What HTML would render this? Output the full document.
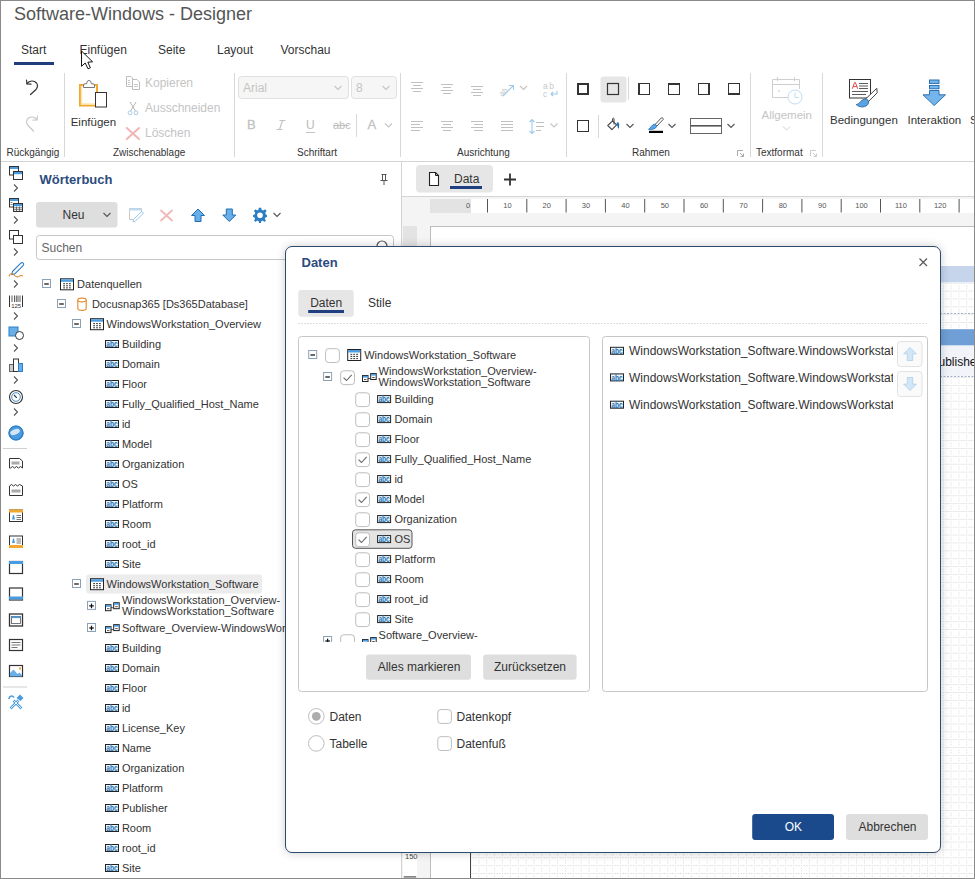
<!DOCTYPE html>
<html><head><meta charset="utf-8">
<style>
*{box-sizing:border-box}
html,body{margin:0;padding:0}
body{width:975px;height:879px;overflow:hidden;position:relative;background:#fff;font-family:"Liberation Sans",sans-serif;color:#333}
.a{position:absolute}
.t{position:absolute;white-space:nowrap;line-height:20px;font-size:12px;color:#333}
.s11{font-size:11px}
.s10{font-size:10px}
.dis{color:#c4c4c4}
.sep{position:absolute;width:1px;background:#d6d6d6}
svg{position:absolute;overflow:visible}
</style></head><body>

<!-- window frame -->
<div class="a" style="left:0;top:0;width:975px;height:879px;border:1px solid #8a8a8a;z-index:50;pointer-events:none"></div>

<!-- title -->
<div class="t" style="left:14px;top:2px;font-size:18px;line-height:24px;color:#555">Software-Windows - Designer</div>

<!-- ribbon tabs -->
<div class="t" style="left:21px;top:40px">Start</div>
<div class="t" style="left:79.5px;top:40px">Einfügen</div>
<div class="t" style="left:158px;top:40px">Seite</div>
<div class="t" style="left:217px;top:40px">Layout</div>
<div class="t" style="left:280.5px;top:40px">Vorschau</div>
<div class="a" style="left:14px;top:62px;width:40px;height:3px;background:#1f3d7a"></div>


<!-- RIBBON CONTENT -->
<svg width="975" height="170" style="left:0;top:0">
 <!-- separators -->
 <g fill="#d8d8d8">
  <rect x="64" y="73" width="1" height="84"/>
  <rect x="234" y="73" width="1" height="84"/>
  <rect x="400" y="73" width="1" height="84"/>
  <rect x="566" y="73" width="1" height="84"/>
  <rect x="750" y="73" width="1" height="84"/>
  <rect x="822" y="73" width="1" height="84"/>
  <rect x="356" y="114" width="1" height="23"/>
  <rect x="628" y="77" width="1" height="23"/>
  <rect x="598" y="115" width="1" height="23"/>
 </g>
 <!-- undo -->
 <g fill="none" stroke="#333" stroke-width="1.2" stroke-linecap="round">
  <path d="M27 83.5 C29.5 80.5 34 80 36.5 83 C38 85 37.5 87.5 36 89.5 L30.5 94.5"/>
  <path d="M26.5 80 L27 84 L31 84.2"/>
 </g>
 <g fill="none" stroke="#c8c8c8" stroke-width="1.2" stroke-linecap="round">
  <path d="M37 119.5 C34.5 116.5 30 116 27.5 119 C26 121 26.5 123.5 28 125.5 L33.5 131"/>
  <path d="M37.5 116 L37 120 L33 120.2"/>
 </g>
 <!-- clipboard -->
 <rect x="80" y="85" width="17" height="20.5" fill="#fff" stroke="#f0a830" stroke-width="2"/><path d="M81.5 86 V104 H95" stroke="#ffe6b0" stroke-width="1.5" fill="none"/>
 <path d="M83.5 87.5 L83.5 85 Q83.5 83.8 85 83.8 L86.6 83.8 Q86.8 80.4 89 80.4 Q91.2 80.4 91.4 83.8 L93 83.8 Q94.5 83.8 94.5 85 L94.5 87.5 Z" fill="#fff" stroke="#777" stroke-width="1"/>
 <rect x="95.5" y="92.5" width="11" height="14.5" fill="#fff" stroke="#333" stroke-width="1"/>
 <!-- copy -->
 <g fill="#fff" stroke="#bdbdbd" stroke-width="1">
  <path d="M126.5 76.5 H131 L132.5 78 V86.5 H126.5 Z"/>
  <path d="M132.5 79.5 H137 L139.5 82 V89.5 H132.5 Z"/>
  <path d="M128 80.5 H130 M128 82.5 H130.5 M128 84.5 H130.5 M134 84.5 H138 M134 86.5 H138" fill="none" stroke-width="0.8"/>
 </g>
 <!-- scissors -->
 <g fill="none" stroke-width="1">
  <path d="M130 102 L135.5 111 M136 102 L130.5 111" stroke="#b5b5b5"/>
  <circle cx="130" cy="112.8" r="1.9" stroke="#a9cde8"/>
  <circle cx="136" cy="112.8" r="1.9" stroke="#a9cde8"/>
 </g>
 <!-- delete X -->
 <path d="M126.8 128 L139 139 M139 128 L126.8 139" stroke="#f2b5b5" stroke-width="2" stroke-linecap="round"/>
 <!-- font combos -->
 <rect x="238.5" y="76.5" width="110" height="22" rx="3" fill="#f6f6f6" stroke="#e0e0e0"/>
 <rect x="351.5" y="76.5" width="45" height="22" rx="3" fill="#f6f6f6" stroke="#e0e0e0"/>
 <g fill="none" stroke="#c4c4c4" stroke-width="1.1">
  <path d="M334.5 86 L338 89.5 L341.5 86"/>
  <path d="M382.5 86 L386 89.5 L389.5 86"/>
  <path d="M385 123.5 L388.5 127 L392 123.5"/>
  <path d="M520 86 L523.5 89.5 L527 86"/>
  <path d="M550.5 123.5 L554 127 L557.5 123.5"/>
 </g>
 <!-- U underline / abc strike -->
 <path d="M279.5 120.5 H285.5 M276.5 129.5 H282.5 M282.5 120.5 L279.5 129.5" stroke="#c4c4c4" stroke-width="1.2" fill="none"/>
 <rect x="306" y="132" width="9" height="1" fill="#c4c4c4"/>
 <rect x="333" y="125" width="16" height="1" fill="#c4c4c4"/>
 <!-- align icons row1 -->
 <g stroke="#c0c0c0" stroke-width="1">
  <path d="M411 82.5 H423 M413 85.5 H421 M411 88.5 H423 M413 91.5 H421"/>
  <path d="M441 84.5 H453 M443 87.5 H451 M441 90.5 H453 M443 93.5 H451"/>
  <path d="M471 86.5 H483 M473 89.5 H481 M471 92.5 H483 M473 95.5 H481"/>
  <path d="M411 121.5 H423 M411 124.5 H420 M411 127.5 H423 M411 130.5 H420"/>
  <path d="M441 121.5 H453 M443 124.5 H451 M441 127.5 H453 M443 130.5 H451"/>
  <path d="M471 121.5 H483 M474 124.5 H483 M471 127.5 H483 M474 130.5 H483"/>
  <path d="M501 121.5 H513 M501 124.5 H513 M501 127.5 H513 M501 130.5 H513"/>
  <path d="M536 122.5 H544 M536 126.5 H544 M536 130.5 H541"/>
 </g>
 <!-- rotate text -->
 <text x="499" y="95" font-size="8" fill="#c8c8c8" transform="rotate(-40 503 92)" font-family="Liberation Sans">ab</text>
 <path d="M503 96 L513.5 85.5 M509 85.5 H513.5 V90" stroke="#9fcbea" stroke-width="1.1" fill="none"/>
 <!-- wrap -->
 <text x="543" y="89" font-size="8.5" fill="#c8c8c8" font-family="Liberation Sans" letter-spacing="1.5">ab</text>
 <text x="543" y="97" font-size="8.5" fill="#c8c8c8" font-family="Liberation Sans">c</text>
 <path d="M557 91 V94 H551 M553 92 L551 94 L553 96" stroke="#9fcbea" stroke-width="1.1" fill="none"/>
 <!-- line spacing arrows -->
 <path d="M532 119.5 V133.5 M529.5 122 L532 119.5 L534.5 122 M529.5 131 L532 133.5 L534.5 131" stroke="#9fcbea" stroke-width="1.1" fill="none"/>
 <!-- Rahmen -->
 <rect x="600.5" y="76.5" width="26" height="26" rx="3" fill="#e6e6e6"/>
 <g fill="none" stroke="#333">
  <rect x="578" y="84" width="10" height="10" stroke-width="2"/>
  <rect x="607.5" y="83.5" width="11" height="11" stroke-width="1.2"/>
  <rect x="638.5" y="83.5" width="11" height="11" stroke-width="1"/>
  <path d="M639 83 V95" stroke-width="2"/>
  <rect x="668.5" y="83.5" width="11" height="11" stroke-width="1"/>
  <path d="M668 84 H680" stroke-width="2"/>
  <rect x="698.5" y="83.5" width="11" height="11" stroke-width="1"/>
  <path d="M709 83 V95" stroke-width="2"/>
  <rect x="728.5" y="83.5" width="11" height="11" stroke-width="1"/>
  <path d="M728 94 H740" stroke-width="2"/>
  <rect x="577.5" y="120.5" width="11" height="11" stroke-width="1"/>
 </g>
 <!-- fill bucket -->
 <path d="M607.8 125.5 L612.5 120.8 L616.6 124.9 L611.9 129.6 Z" fill="#fff" stroke="#444" stroke-width="1.1" stroke-linejoin="round"/>
 <path d="M612.6 121 V118.6 Q613.3 117.6 614 118.6 V124.5" fill="none" stroke="#444" stroke-width="1"/>
 <path d="M616.6 122.8 Q618.6 121.2 619.2 124.2 L618.9 129 Q617.6 127.5 617.2 125.5 Z" fill="#1f6fb5"/>
 <!-- brush -->
 <path d="M662.3 117.8 Q663.5 118.3 663.2 119.4 L656.8 126.2 L655 124.6 L661.2 118 Z" fill="#fff" stroke="#444" stroke-width="0.9"/>
 <path d="M648.5 129.3 C650.5 128.8 651 124.8 654.8 124 L656.8 126 C656 129 652 130 648.5 129.3 Z" fill="#5aa8ea" stroke="#1f6fb5" stroke-width="0.8"/>
 <rect x="649" y="130.8" width="14" height="2.2" fill="#000"/>
 <!-- line style -->
 <rect x="690.5" y="118.5" width="31" height="15" fill="#fff" stroke="#666"/>
 <rect x="690.5" y="125" width="31" height="1.6" fill="#555"/>
 <g fill="none" stroke="#555" stroke-width="1.1">
  <path d="M626.5 124 L630 127.5 L633.5 124"/>
  <path d="M668.5 124 L672 127.5 L675.5 124"/>
  <path d="M727.5 124 L731 127.5 L734.5 124"/>
 </g>
 <!-- launchers -->
 <g fill="none" stroke="#aaa" stroke-width="1">
  <path d="M737.5 156 V150.5 H743"/><path d="M740 153 L743.5 156.5 M743.5 153.5 V156.5 H740.5"/>
  <path d="M810.5 156 V150.5 H816" stroke="#ccc"/><path d="M813 153 L816.5 156.5 M816.5 153.5 V156.5 H813.5" stroke="#ccc"/>
 </g>
 <!-- calendar -->
 <g fill="none" stroke="#cfcfcf" stroke-width="1">
  <path d="M790 97.5 H772.5 V79.5 H799.5 V89"/>
  <path d="M772.5 84.5 H799.5 M777.5 77 V81 M794.5 77 V81"/>
  <circle cx="795" cy="97" r="7" fill="#fff" stroke="#bfdcf2"/>
  <path d="M795 92.5 V97.5 H798.5" stroke="#bfdcf2"/>
  <path d="M783 126.5 L786.5 130 L790 126.5"/>
 </g>
 <circle cx="779" cy="91" r="0.8" fill="#bbb"/>
 <!-- Bedingungen icon -->
 <rect x="849.5" y="79.5" width="21" height="18.5" fill="#fff" stroke="#333"/>
 <path d="M852.3 88.8 L854.6 82.5 H855.4 L857.7 88.8 M853.2 86.6 H856.8" stroke="#e04848" stroke-width="1" fill="none"/>
 <path d="M859 83.5 H868 M859 86 H868 M859 88.5 H868 M852 91.5 H868 M852 94.5 H866" stroke="#333" stroke-width="0.8"/>
 <path d="M876.8 88.3 L865 99.5 L867.8 102.3 L877.2 92.8 Z" fill="#fff" stroke="#333" stroke-width="0.9"/>
 <path d="M856.2 104.6 C859.5 104.5 860.5 100 864.5 99 C868.5 98.5 869.8 102.5 867.2 105.2 C864 107.8 859 107.4 856.2 104.6 Z" fill="#5aa3e0" stroke="#1f5f9f" stroke-width="0.8"/>
 <!-- Interaktion icon -->
 <g fill="#74b6ec" stroke="#1f64a8" stroke-width="0.9">
  <rect x="929.5" y="80" width="9.5" height="3.4"/>
  <rect x="929.5" y="85.4" width="9.5" height="3.4"/>
  <path d="M929.5 90.5 H939 V94.8 H945.5 L934.2 105.5 L923 94.8 H929.5 Z"/>
 </g>
 <!-- mouse cursor -->
 <path d="M81.5 51 V66.3 L85.2 63 L88 68.8 L90.4 67.8 L87.8 62.2 L92.6 61.8 Z" fill="#fff" stroke="#111" stroke-width="1" stroke-linejoin="round"/>
</svg>
<div class="t dis" style="left:145px;top:72.5px">Kopieren</div>
<div class="t dis" style="left:145px;top:97.5px">Ausschneiden</div>
<div class="t dis" style="left:145px;top:122.5px">Löschen</div>
<div class="t" style="left:70.7px;top:111.5px;font-size:11.5px">Einfügen</div>
<div class="t s10" style="left:6.5px;top:143px">Rückgängig</div>
<div class="t s10" style="left:113px;top:143px">Zwischenablage</div>
<div class="t s10" style="left:297px;top:143px">Schriftart</div>
<div class="t s10" style="left:457px;top:143px">Ausrichtung</div>
<div class="t s10" style="left:632px;top:143px">Rahmen</div>
<div class="t s10" style="left:756px;top:143px">Textformat</div>
<div class="t dis" style="left:243px;top:77.5px">Arial</div>
<div class="t dis" style="left:356px;top:77.5px">8</div>
<div class="t dis" style="left:247px;top:115px;font-size:13px;-webkit-text-stroke:0.3px #c4c4c4;color:#c0c0c0">B</div>

<div class="t dis" style="left:306px;top:114.5px;font-size:12px;color:#bcbcbc">U</div>
<div class="t dis" style="left:333px;top:115px;font-size:11px;color:#bcbcbc">abc</div>
<div class="t dis" style="left:367.5px;top:115px;font-size:13px;-webkit-text-stroke:0.3px #c4c4c4;color:#c0c0c0">A</div>
<div class="t dis" style="left:761.5px;top:104.5px;font-size:11.5px">Allgemein</div>
<div class="t" style="left:830px;top:109.7px;font-size:11.5px">Bedingungen</div>
<div class="t" style="left:907.5px;top:109.7px;font-size:11.5px">Interaktion</div>
<div class="t" style="left:970px;top:109.7px;font-size:11.5px">S</div>

<!-- ribbon bottom border -->
<div class="a" style="left:0;top:161px;width:975px;height:1px;background:#d4d4d4"></div>

<!-- SIDEBAR / PANEL -->
<div class="a" style="left:401px;top:162px;width:1px;height:717px;background:#d4d4d4"></div>


<svg width="400" height="879" style="left:0;top:0">
 <g fill="none" stroke="#555" stroke-width="1.1">
  <path d="M14 184.5 L17.5 188 L14 191.5"/>
  <path d="M14 216.5 L17.5 220 L14 223.5"/>
  <path d="M14 248.5 L17.5 252 L14 255.5"/>
  <path d="M14 280.5 L17.5 284 L14 287.5"/>
  <path d="M14 312.5 L17.5 316 L14 319.5"/>
  <path d="M14 344.5 L17.5 348 L14 351.5"/>
  <path d="M14 376.5 L17.5 380 L14 383.5"/>
  <path d="M14 408.5 L17.5 412 L14 415.5"/>
 </g>
 <!-- icon1 windows -->
 <rect x="9.5" y="166.5" width="9" height="8.5" fill="#fff" stroke="#333"/>
 <rect x="10" y="167" width="8" height="2" fill="#4a9be0"/>
 <rect x="13.5" y="171.5" width="9" height="8" fill="#fff" stroke="#333"/>
 <rect x="14" y="172" width="8" height="2.2" fill="#4a9be0"/>
 <!-- icon2 tables -->
 <rect x="9.5" y="198.5" width="9" height="8.5" fill="#fff" stroke="#333"/>
 <rect x="10" y="199" width="8" height="2" fill="#4a9be0"/>
 <path d="M10.5 202.5 H12.5 M10.5 204.5 H12.5" stroke="#666" stroke-width="0.8"/>
 <rect x="13.5" y="203.5" width="9" height="8" fill="#fff" stroke="#333"/>
 <rect x="14" y="204" width="8" height="2.2" fill="#4a9be0"/>
 <path d="M14 207.8 H22 M14 209.7 H22 M16.5 206.5 V211 M19.5 206.5 V211" stroke="#555" stroke-width="0.8"/>
 <!-- icon3 -->
 <rect x="9.5" y="230.5" width="9" height="8.5" fill="#fff" stroke="#333"/>
 <rect x="13.5" y="235.5" width="9" height="8" fill="#fff" stroke="#333"/>
 <!-- pen -->
 <path d="M12.5 271.5 L20.8 263.2 Q22 262 23.2 263.2 Q24.3 264.4 23.1 265.6 L14.8 273.9 L11.8 274.6 Z" fill="#fff" stroke="#2f7fc4" stroke-width="1.1" stroke-linejoin="round"/>
 <path d="M9 276.5 C10 272.5 12.5 273 14 275 C15.5 277 18 277.5 20 275.8 C21 275 22 275.5 23 276" fill="none" stroke="#e08a2c" stroke-width="1.1"/>
 <!-- barcode -->
 <path d="M9.5 295.5 V307 M22.5 295.5 V307" stroke="#333" stroke-width="1"/>
 <path d="M12 295.5 V302 M14.5 295.5 V302 M16.3 295.5 V302 M18 295.5 V302 M20 295.5 V302" stroke="#333" stroke-width="0.8"/>
 <text x="11.2" y="307.5" font-size="5" fill="#333" font-family="Liberation Sans" textLength="10" lengthAdjust="spacingAndGlyphs">125</text>
 <!-- shapes -->
 <rect x="9" y="327" width="9" height="9" fill="#68aee8" stroke="#2f7fc4"/>
 <circle cx="19.5" cy="335.5" r="4" fill="#fff" stroke="#333"/>
 <!-- chart -->
 <rect x="9.5" y="364.5" width="4" height="7" fill="#ccc" stroke="#666"/>
 <rect x="13.5" y="359" width="5" height="12.5" fill="#fff" stroke="#333"/>
 <rect x="18.5" y="363.5" width="4" height="8" fill="#68aee8" stroke="#2f7fc4"/>
 <!-- gauge -->
 <circle cx="16" cy="397" r="6.5" fill="#fff" stroke="#333" stroke-width="1.1"/>
 <circle cx="16" cy="397" r="4.3" fill="none" stroke="#2f7fc4" stroke-width="0.9"/>
 <path d="M14 395 L16.8 397.8" stroke="#333" stroke-width="1.1"/>
 <!-- globe -->
 <circle cx="16" cy="433" r="7" fill="#4a9be0" stroke="#2f7fc4"/>
 <ellipse cx="15" cy="432" rx="5" ry="2.6" fill="#fff" opacity=".75" transform="rotate(-20 15 432)"/>
 <circle cx="16" cy="433" r="7" fill="none" stroke="#2f7fc4" stroke-width="1.2"/>
 <rect x="3" y="448" width="24" height="1" fill="#d0d0d0"/>
 <!-- band icons -->
 <path d="M9.5 468 V458.5 H19.5 L22.5 461 V468 L20.5 466.5 L18.5 468 L16.5 466.5 L14.5 468 L12.5 466.5 L10.5 468 Z" fill="#fff" stroke="#333"/>
 <rect x="11.5" y="461.5" width="8" height="3" fill="#aaa"/>
 <path d="M9.5 486 L11.5 484.5 L13.5 486 L15.5 484.5 L17.5 486 L19.5 484.5 L22.5 486 V495.5 H9.5 Z" fill="#fff" stroke="#333"/>
 <rect x="11.5" y="489.5" width="9" height="3" fill="#aaa"/>
 <rect x="9.5" y="510" width="13" height="11.5" fill="#fff" stroke="#333"/>
 <rect x="9" y="509.5" width="14" height="3" fill="#f0a830"/>
 <path d="M12 519.5 L13 515 H14 L15 519.5 Z" fill="#4a9be0"/>
 <path d="M16.5 515.5 H21 M16.5 517.5 H21 M16.5 519.5 H21" stroke="#555" stroke-width="0.8"/>
 <rect x="9.5" y="536" width="13" height="11.5" fill="#fff" stroke="#333"/>
 <rect x="9" y="545" width="14" height="3" fill="#f0a830"/>
 <path d="M12 543 L13 538.5 H14 L15 543 Z" fill="#4a9be0"/>
 <path d="M16.5 539 H21 M16.5 541 H21 M16.5 543 H21" stroke="#555" stroke-width="0.8"/>
 <rect x="9.5" y="561.5" width="13" height="12" fill="#fff" stroke="#333" stroke-width="1.2"/>
 <rect x="9" y="561" width="14" height="3" fill="#4a9be0"/>
 <rect x="9.5" y="588" width="13" height="12" fill="#fff" stroke="#333" stroke-width="1.2"/>
 <rect x="9" y="596.5" width="14" height="3" fill="#4a9be0"/>
 <rect x="9.5" y="614" width="13" height="12" fill="#fff" stroke="#333" stroke-width="1.3"/>
 <rect x="11.5" y="616.5" width="9" height="7" fill="#fff" stroke="#555" stroke-width="0.8"/>
 <rect x="11.5" y="616.5" width="9" height="1.6" fill="#4a9be0"/>
 <rect x="9.5" y="639.5" width="13" height="11" fill="#fff" stroke="#333" stroke-width="1.2"/>
 <path d="M11.5 642.5 H20.5 M11.5 645 H20.5 M11.5 647.5 H17.5" stroke="#666" stroke-width="0.9"/>
 <rect x="9.5" y="665.5" width="13" height="11" fill="#fff" stroke="#333" stroke-width="1.2"/>
 <path d="M10 676.5 V673 L13.5 669.5 L17.5 674 L19.5 672.5 L22 675 V676.5 Z" fill="#68aee8"/>
 <rect x="19" y="667.5" width="2" height="2" fill="#f0a830"/>
 <rect x="3" y="686.5" width="24" height="1" fill="#d0d0d0"/>
 <path d="M10.5 708.5 L18.5 700.5 M13.5 700.5 L21.5 708.5" stroke="#4a9be0" stroke-width="2.6" fill="none"/>
 <path d="M10.5 708.5 L18.5 700.5 M13.5 700.5 L21.5 708.5" stroke="#fff" stroke-width="0.9" fill="none"/>
 <path d="M16.5 698 L20 694.5 L23.5 698 L20.5 701 Z" fill="#4a9be0"/>
 <path d="M9 699 C9 696 12 695 14 697.5" stroke="#4a9be0" stroke-width="1.6" fill="none"/>
 <!-- panel toolbar -->
 <rect x="36" y="202" width="81.5" height="25.5" rx="3" fill="#dedede"/>
 <path d="M103.5 213 L107 216.5 L110.5 213" fill="none" stroke="#555" stroke-width="1.1"/>
 <path d="M137 219.5 H129.5 V208.5 H141.5 V213" fill="none" stroke="#c8c8c8"/>
 <rect x="129.5" y="208.5" width="12" height="2" fill="#bcdcf4"/>
 <path d="M142.8 213.8 L135.5 221.1 L133 221.8 L133.7 219.3 L141 212 Q141.9 211.2 142.7 212 Q143.5 212.9 142.8 213.8 Z" fill="#fff" stroke="#9fcbea" stroke-width="1"/>
 <path d="M160.5 210 L172.5 221 M172.5 210 L160.5 221" stroke="#f2b8b8" stroke-width="1.8"/>
 <path d="M198 209 L204.5 215.5 H201 V221.5 H195 V215.5 H191.5 Z" fill="#68aee8" stroke="#1f6fb5" stroke-width="1"/>
 <path d="M229.3 221.5 L235.8 215 H232.3 V209 H226.3 V215 H222.8 Z" fill="#68aee8" stroke="#1f6fb5" stroke-width="1"/>
 <g transform="translate(260 215.3)">
  <path d="M-1.3 -7 H1.3 L1.7 -4.8 L3.5 -4 L5.3 -5.3 L7 -3.5 L5.5 -1.6 L6.2 0.2 L7.3 0.8 V2.8 L5.6 3.4 L5 5 L6.3 6.5 L4.5 8 L3 6.6 L1.3 7.3 L1 9 H-1 L-1.4 7.3 L-3 6.6 L-4.6 8 L-6.3 6.5 L-5.1 5 L-5.7 3.4 L-7.3 2.8 V0.8 L-5.6 0.2 L-5 -1.6 L-6.4 -3.5 L-4.6 -5.3 L-3 -4 L-1.6 -4.8 Z" fill="#2a7fc4" transform="scale(0.95) translate(0 -1)"/>
  <circle cx="0" cy="0" r="2.8" fill="#fff"/>
 </g>
 <path d="M273.5 213 L277 216.5 L280.5 213" fill="none" stroke="#555" stroke-width="1.1"/>
 <!-- pin -->
 <path d="M381.5 174.5 H386.5 M382.5 175 V180.5 H385.5 V175 M380.5 180.5 H387.5 M384 180.5 V185" stroke="#555" stroke-width="1" fill="none"/>
 <!-- search -->
 <rect x="36.5" y="235.5" width="357" height="24" rx="3" fill="#fff" stroke="#c6c6c6"/>
 <circle cx="382" cy="246" r="5" fill="none" stroke="#555" stroke-width="1.2"/>
</svg>
<div class="t" style="left:39.5px;top:169.5px;font-size:13px;font-weight:bold;color:#2c4c7c">Wörterbuch</div>
<div class="t" style="left:62.5px;top:204.5px">Neu</div>
<div class="t" style="left:41.5px;top:237.5px;color:#666">Suchen</div>

<div class="a" style="left:0;top:162px;width:401px;height:716px;overflow:hidden"><div class="a" style="left:0;top:-162px;width:401px;height:879px"><svg width="401" height="879" style="left:0;top:0"><rect x="42.5" y="279.5" width="8" height="8" fill="#fff" stroke="#8da1b6"/><path d="M44.2 284.0 H48.8" stroke="#111" stroke-width="1.25"/><rect x="60.5" y="278.8" width="13" height="11" fill="#fff" stroke="#222"/><rect x="61" y="279.3" width="12" height="2.5" fill="#4d9de0"/><rect x="63.2" y="283.1" width="1.8" height="1.1" fill="#444"/><rect x="66.10000000000001" y="283.1" width="1.8" height="1.1" fill="#444"/><rect x="69.0" y="283.1" width="1.8" height="1.1" fill="#444"/><rect x="63.2" y="285.20000000000005" width="1.8" height="1.1" fill="#444"/><rect x="66.10000000000001" y="285.20000000000005" width="1.8" height="1.1" fill="#444"/><rect x="69.0" y="285.20000000000005" width="1.8" height="1.1" fill="#444"/><rect x="63.2" y="287.3" width="1.8" height="1.1" fill="#444"/><rect x="66.10000000000001" y="287.3" width="1.8" height="1.1" fill="#444"/><rect x="69.0" y="287.3" width="1.8" height="1.1" fill="#444"/><rect x="57.5" y="299.5" width="8" height="8" fill="#fff" stroke="#8da1b6"/><path d="M59.2 304.0 H63.8" stroke="#111" stroke-width="1.25"/><path d="M77.8 300.0 V308.5 C77.8 311.0 86.2 311.0 86.2 308.5 V300.0" fill="#fff" stroke="#e08a2c" stroke-width="1.1"/><ellipse cx="82" cy="300.0" rx="4.2" ry="1.9" fill="#fff" stroke="#e08a2c" stroke-width="1.1"/><rect x="72.5" y="319.5" width="8" height="8" fill="#fff" stroke="#8da1b6"/><path d="M74.2 324.0 H78.8" stroke="#111" stroke-width="1.25"/><rect x="90.5" y="318.7" width="13" height="11" fill="#fff" stroke="#222"/><rect x="91" y="319.2" width="12" height="2.5" fill="#4d9de0"/><rect x="93.2" y="323.0" width="1.8" height="1.1" fill="#444"/><rect x="96.10000000000001" y="323.0" width="1.8" height="1.1" fill="#444"/><rect x="99.0" y="323.0" width="1.8" height="1.1" fill="#444"/><rect x="93.2" y="325.1" width="1.8" height="1.1" fill="#444"/><rect x="96.10000000000001" y="325.1" width="1.8" height="1.1" fill="#444"/><rect x="99.0" y="325.1" width="1.8" height="1.1" fill="#444"/><rect x="93.2" y="327.2" width="1.8" height="1.1" fill="#444"/><rect x="96.10000000000001" y="327.2" width="1.8" height="1.1" fill="#444"/><rect x="99.0" y="327.2" width="1.8" height="1.1" fill="#444"/><rect x="105.5" y="340.5" width="13" height="7" fill="#eef7fd" stroke="#222"/><text x="106.3" y="347.2" font-size="8.6" font-weight="bold" fill="#2270b0" font-family="Liberation Sans" textLength="11.4" lengthAdjust="spacingAndGlyphs">abc</text><rect x="105.5" y="360.5" width="13" height="7" fill="#eef7fd" stroke="#222"/><text x="106.3" y="367.2" font-size="8.6" font-weight="bold" fill="#2270b0" font-family="Liberation Sans" textLength="11.4" lengthAdjust="spacingAndGlyphs">abc</text><rect x="105.5" y="380.5" width="13" height="7" fill="#eef7fd" stroke="#222"/><text x="106.3" y="387.2" font-size="8.6" font-weight="bold" fill="#2270b0" font-family="Liberation Sans" textLength="11.4" lengthAdjust="spacingAndGlyphs">abc</text><rect x="105.5" y="400.5" width="13" height="7" fill="#eef7fd" stroke="#222"/><text x="106.3" y="407.2" font-size="8.6" font-weight="bold" fill="#2270b0" font-family="Liberation Sans" textLength="11.4" lengthAdjust="spacingAndGlyphs">abc</text><rect x="105.5" y="420.5" width="13" height="7" fill="#eef7fd" stroke="#222"/><text x="106.3" y="427.2" font-size="8.6" font-weight="bold" fill="#2270b0" font-family="Liberation Sans" textLength="11.4" lengthAdjust="spacingAndGlyphs">abc</text><rect x="105.5" y="440.5" width="13" height="7" fill="#eef7fd" stroke="#222"/><text x="106.3" y="447.2" font-size="8.6" font-weight="bold" fill="#2270b0" font-family="Liberation Sans" textLength="11.4" lengthAdjust="spacingAndGlyphs">abc</text><rect x="105.5" y="460.5" width="13" height="7" fill="#eef7fd" stroke="#222"/><text x="106.3" y="467.2" font-size="8.6" font-weight="bold" fill="#2270b0" font-family="Liberation Sans" textLength="11.4" lengthAdjust="spacingAndGlyphs">abc</text><rect x="105.5" y="480.5" width="13" height="7" fill="#eef7fd" stroke="#222"/><text x="106.3" y="487.2" font-size="8.6" font-weight="bold" fill="#2270b0" font-family="Liberation Sans" textLength="11.4" lengthAdjust="spacingAndGlyphs">abc</text><rect x="105.5" y="500.5" width="13" height="7" fill="#eef7fd" stroke="#222"/><text x="106.3" y="507.2" font-size="8.6" font-weight="bold" fill="#2270b0" font-family="Liberation Sans" textLength="11.4" lengthAdjust="spacingAndGlyphs">abc</text><rect x="105.5" y="520.5" width="13" height="7" fill="#eef7fd" stroke="#222"/><text x="106.3" y="527.2" font-size="8.6" font-weight="bold" fill="#2270b0" font-family="Liberation Sans" textLength="11.4" lengthAdjust="spacingAndGlyphs">abc</text><rect x="105.5" y="540.5" width="13" height="7" fill="#eef7fd" stroke="#222"/><text x="106.3" y="547.2" font-size="8.6" font-weight="bold" fill="#2270b0" font-family="Liberation Sans" textLength="11.4" lengthAdjust="spacingAndGlyphs">abc</text><rect x="105.5" y="560.5" width="13" height="7" fill="#eef7fd" stroke="#222"/><text x="106.3" y="567.2" font-size="8.6" font-weight="bold" fill="#2270b0" font-family="Liberation Sans" textLength="11.4" lengthAdjust="spacingAndGlyphs">abc</text><rect x="86" y="574.4" width="176" height="19.2" rx="3" fill="#ececec"/><rect x="72.5" y="579.5" width="8" height="8" fill="#fff" stroke="#8da1b6"/><path d="M74.2 584.0 H78.8" stroke="#111" stroke-width="1.25"/><rect x="90.5" y="578.7" width="13" height="11" fill="#fff" stroke="#222"/><rect x="91" y="579.2" width="12" height="2.5" fill="#4d9de0"/><rect x="93.2" y="583.0" width="1.8" height="1.1" fill="#444"/><rect x="96.10000000000001" y="583.0" width="1.8" height="1.1" fill="#444"/><rect x="99.0" y="583.0" width="1.8" height="1.1" fill="#444"/><rect x="93.2" y="585.1" width="1.8" height="1.1" fill="#444"/><rect x="96.10000000000001" y="585.1" width="1.8" height="1.1" fill="#444"/><rect x="99.0" y="585.1" width="1.8" height="1.1" fill="#444"/><rect x="93.2" y="587.2" width="1.8" height="1.1" fill="#444"/><rect x="96.10000000000001" y="587.2" width="1.8" height="1.1" fill="#444"/><rect x="99.0" y="587.2" width="1.8" height="1.1" fill="#444"/><rect x="87.5" y="601.4" width="8" height="8" fill="#fff" stroke="#8da1b6"/><path d="M89.2 605.9 H93.8" stroke="#111" stroke-width="1.25"/><path d="M91.5 603.6 V608.1999999999999" stroke="#111" stroke-width="1.25"/><rect x="105.5" y="604.7" width="5.5" height="6" fill="#fff" stroke="#222"/><rect x="105.8" y="605.0" width="5" height="1.8" fill="#4d9de0"/><rect x="107" y="608.2" width="2.5" height="1" fill="#555"/><rect x="113.7" y="602.7" width="5.5" height="6" fill="#fff" stroke="#222"/><rect x="114.0" y="603.0" width="5" height="1.8" fill="#4d9de0"/><rect x="115.2" y="606.2" width="2.5" height="1" fill="#555"/><path d="M111 607.7 H113.5" stroke="#222" stroke-width="0.8"/><rect x="87.5" y="623.5" width="8" height="8" fill="#fff" stroke="#8da1b6"/><path d="M89.2 628.0 H93.8" stroke="#111" stroke-width="1.25"/><path d="M91.5 625.7 V630.3" stroke="#111" stroke-width="1.25"/><rect x="105.5" y="626.6" width="5.5" height="6" fill="#fff" stroke="#222"/><rect x="105.8" y="626.9" width="5" height="1.8" fill="#4d9de0"/><rect x="107" y="630.1" width="2.5" height="1" fill="#555"/><rect x="113.7" y="624.6" width="5.5" height="6" fill="#fff" stroke="#222"/><rect x="114.0" y="624.9" width="5" height="1.8" fill="#4d9de0"/><rect x="115.2" y="628.1" width="2.5" height="1" fill="#555"/><path d="M111 629.6 H113.5" stroke="#222" stroke-width="0.8"/><rect x="105.5" y="644.5" width="13" height="7" fill="#eef7fd" stroke="#222"/><text x="106.3" y="651.2" font-size="8.6" font-weight="bold" fill="#2270b0" font-family="Liberation Sans" textLength="11.4" lengthAdjust="spacingAndGlyphs">abc</text><rect x="105.5" y="664.5" width="13" height="7" fill="#eef7fd" stroke="#222"/><text x="106.3" y="671.2" font-size="8.6" font-weight="bold" fill="#2270b0" font-family="Liberation Sans" textLength="11.4" lengthAdjust="spacingAndGlyphs">abc</text><rect x="105.5" y="684.5" width="13" height="7" fill="#eef7fd" stroke="#222"/><text x="106.3" y="691.2" font-size="8.6" font-weight="bold" fill="#2270b0" font-family="Liberation Sans" textLength="11.4" lengthAdjust="spacingAndGlyphs">abc</text><rect x="105.5" y="704.5" width="13" height="7" fill="#eef7fd" stroke="#222"/><text x="106.3" y="711.2" font-size="8.6" font-weight="bold" fill="#2270b0" font-family="Liberation Sans" textLength="11.4" lengthAdjust="spacingAndGlyphs">abc</text><rect x="105.5" y="724.5" width="13" height="7" fill="#eef7fd" stroke="#222"/><text x="106.3" y="731.2" font-size="8.6" font-weight="bold" fill="#2270b0" font-family="Liberation Sans" textLength="11.4" lengthAdjust="spacingAndGlyphs">abc</text><rect x="105.5" y="744.5" width="13" height="7" fill="#eef7fd" stroke="#222"/><text x="106.3" y="751.2" font-size="8.6" font-weight="bold" fill="#2270b0" font-family="Liberation Sans" textLength="11.4" lengthAdjust="spacingAndGlyphs">abc</text><rect x="105.5" y="764.5" width="13" height="7" fill="#eef7fd" stroke="#222"/><text x="106.3" y="771.2" font-size="8.6" font-weight="bold" fill="#2270b0" font-family="Liberation Sans" textLength="11.4" lengthAdjust="spacingAndGlyphs">abc</text><rect x="105.5" y="784.5" width="13" height="7" fill="#eef7fd" stroke="#222"/><text x="106.3" y="791.2" font-size="8.6" font-weight="bold" fill="#2270b0" font-family="Liberation Sans" textLength="11.4" lengthAdjust="spacingAndGlyphs">abc</text><rect x="105.5" y="804.5" width="13" height="7" fill="#eef7fd" stroke="#222"/><text x="106.3" y="811.2" font-size="8.6" font-weight="bold" fill="#2270b0" font-family="Liberation Sans" textLength="11.4" lengthAdjust="spacingAndGlyphs">abc</text><rect x="105.5" y="824.5" width="13" height="7" fill="#eef7fd" stroke="#222"/><text x="106.3" y="831.2" font-size="8.6" font-weight="bold" fill="#2270b0" font-family="Liberation Sans" textLength="11.4" lengthAdjust="spacingAndGlyphs">abc</text><rect x="105.5" y="844.5" width="13" height="7" fill="#eef7fd" stroke="#222"/><text x="106.3" y="851.2" font-size="8.6" font-weight="bold" fill="#2270b0" font-family="Liberation Sans" textLength="11.4" lengthAdjust="spacingAndGlyphs">abc</text><rect x="105.5" y="864.5" width="13" height="7" fill="#eef7fd" stroke="#222"/><text x="106.3" y="871.2" font-size="8.6" font-weight="bold" fill="#2270b0" font-family="Liberation Sans" textLength="11.4" lengthAdjust="spacingAndGlyphs">abc</text></svg><div class="t s11" style="left:77.1px;top:274.0px;color:#333">Datenquellen</div><div class="t s11" style="left:91.9px;top:294.0px;color:#333">Docusnap365 [Ds365Database]</div><div class="t s11" style="left:106.5px;top:314.0px;color:#333">WindowsWorkstation_Overview</div><div class="t s11" style="left:121.9px;top:334.0px;color:#333">Building</div><div class="t s11" style="left:121.9px;top:354.0px;color:#333">Domain</div><div class="t s11" style="left:121.9px;top:374.0px;color:#333">Floor</div><div class="t s11" style="left:121.9px;top:394.0px;color:#333">Fully_Qualified_Host_Name</div><div class="t s11" style="left:121.9px;top:414.0px;color:#333">id</div><div class="t s11" style="left:121.9px;top:434.0px;color:#333">Model</div><div class="t s11" style="left:121.9px;top:454.0px;color:#333">Organization</div><div class="t s11" style="left:121.9px;top:474.0px;color:#333">OS</div><div class="t s11" style="left:121.9px;top:494.0px;color:#333">Platform</div><div class="t s11" style="left:121.9px;top:514.0px;color:#333">Room</div><div class="t s11" style="left:121.9px;top:534.0px;color:#333">root_id</div><div class="t s11" style="left:121.9px;top:554.0px;color:#333">Site</div><div class="t s11" style="left:106.5px;top:574.0px;color:#333">WindowsWorkstation_Software</div><div class="t s11" style="left:122.0px;top:594.5px;line-height:11px">WindowsWorkstation_Overview-<br>WindowsWorkstation_Software</div><div class="t s11" style="left:122.0px;top:618.0px;color:#333">Software_Overview-WindowsWorkstation_Software</div><div class="t s11" style="left:121.9px;top:638.0px;color:#333">Building</div><div class="t s11" style="left:121.9px;top:658.0px;color:#333">Domain</div><div class="t s11" style="left:121.9px;top:678.0px;color:#333">Floor</div><div class="t s11" style="left:121.9px;top:698.0px;color:#333">id</div><div class="t s11" style="left:121.9px;top:718.0px;color:#333">License_Key</div><div class="t s11" style="left:121.9px;top:738.0px;color:#333">Name</div><div class="t s11" style="left:121.9px;top:758.0px;color:#333">Organization</div><div class="t s11" style="left:121.9px;top:778.0px;color:#333">Platform</div><div class="t s11" style="left:121.9px;top:798.0px;color:#333">Publisher</div><div class="t s11" style="left:121.9px;top:818.0px;color:#333">Room</div><div class="t s11" style="left:121.9px;top:838.0px;color:#333">root_id</div><div class="t s11" style="left:121.9px;top:858.0px;color:#333">Site</div></div></div>
<!-- CANVAS -->

<div class="a" style="left:402px;top:196px;width:573px;height:683px;background:#f4f4f4"></div>
<div class="a" style="left:402px;top:196px;width:573px;height:1px;background:#d4d4d4"></div>
<svg width="975" height="879" style="left:0;top:0">
 <defs>
  <pattern id="grid" x="470.5" y="267" width="7.87" height="7.87" patternUnits="userSpaceOnUse">
   <path d="M0 0.5 H7.87" stroke="#c8c8c8" stroke-width="1" stroke-dasharray="1 1.6"/>
   <path d="M0.5 0 V7.87" stroke="#d6d6d6" stroke-width="1" stroke-dasharray="1 1.6"/>
  </pattern>
 </defs>
 <rect x="416" y="165" width="77" height="27.5" rx="4" fill="#e6e6e6"/>
 <path d="M429.5 172.5 H435.5 L438.5 175.5 V185.5 H429.5 Z" fill="#fff" stroke="#222" stroke-width="1.1"/>
 <path d="M435.5 172.5 V175.5 H438.5" fill="none" stroke="#222" stroke-width="1"/>
 <rect x="450" y="186" width="32" height="3" fill="#1f3f80"/>
 <path d="M504 179.5 H516 M510 173.5 V185.5" stroke="#333" stroke-width="1.8"/>
 <!-- horizontal ruler -->
 <rect x="430" y="199" width="41" height="14" fill="#e3e3e3"/>
 <rect x="471" y="199" width="504" height="14" fill="#fff"/>
 <rect x="487.0" y="199" width="1" height="13.5" fill="#555"/><rect x="526.3" y="199" width="1" height="13.5" fill="#555"/><rect x="565.6" y="199" width="1" height="13.5" fill="#555"/><rect x="604.9" y="199" width="1" height="13.5" fill="#555"/><rect x="644.2" y="199" width="1" height="13.5" fill="#555"/><rect x="683.5" y="199" width="1" height="13.5" fill="#555"/><rect x="722.8" y="199" width="1" height="13.5" fill="#555"/><rect x="762.1" y="199" width="1" height="13.5" fill="#555"/><rect x="801.4" y="199" width="1" height="13.5" fill="#555"/><rect x="840.7" y="199" width="1" height="13.5" fill="#555"/><rect x="880.0" y="199" width="1" height="13.5" fill="#555"/><rect x="919.3" y="199" width="1" height="13.5" fill="#555"/><rect x="958.6" y="199" width="1" height="13.5" fill="#555"/>
 <!-- vertical ruler -->
 <rect x="403" y="226" width="14" height="40" fill="#e3e3e3"/>
 <rect x="403" y="266" width="14" height="613" fill="#fff"/>
 <rect x="430" y="226" width="1" height="653" fill="#bdbdbd"/>
 <rect x="403.7" y="876.3" width="12.5" height="1.2" fill="#555"/>
 <!-- page -->
 <rect x="430.5" y="226.5" width="560" height="660" fill="#fff" stroke="#bdbdbd"/>
 <rect x="471" y="266" width="504" height="613" fill="url(#grid)"/>
 <rect x="470" y="266" width="1" height="613" fill="#444"/>
 <rect x="471" y="266" width="504" height="16.3" fill="#c3d3ea" opacity=".95"/>
 <line x1="471" y1="313.5" x2="975" y2="313.5" stroke="#9db0cc" stroke-dasharray="2 1.5"/>
 <rect x="471" y="329.2" width="504" height="16.3" fill="#6f9fd6"/>
 <rect x="471" y="345.5" width="504" height="30.5" fill="#edf2f9" opacity=".8"/>
 <line x1="471" y1="376.5" x2="975" y2="376.5" stroke="#9db0cc" stroke-dasharray="2 1.5"/>
</svg>
<div class="t" style="left:448.0px;top:196.6px;width:40px;text-align:center;font-size:7.5px;line-height:18px;color:#555">0</div><div class="t" style="left:487.4px;top:196.6px;width:40px;text-align:center;font-size:7.5px;line-height:18px;color:#555">10</div><div class="t" style="left:526.7px;top:196.6px;width:40px;text-align:center;font-size:7.5px;line-height:18px;color:#555">20</div><div class="t" style="left:566.0px;top:196.6px;width:40px;text-align:center;font-size:7.5px;line-height:18px;color:#555">30</div><div class="t" style="left:605.4px;top:196.6px;width:40px;text-align:center;font-size:7.5px;line-height:18px;color:#555">40</div><div class="t" style="left:644.8px;top:196.6px;width:40px;text-align:center;font-size:7.5px;line-height:18px;color:#555">50</div><div class="t" style="left:684.1px;top:196.6px;width:40px;text-align:center;font-size:7.5px;line-height:18px;color:#555">60</div><div class="t" style="left:723.5px;top:196.6px;width:40px;text-align:center;font-size:7.5px;line-height:18px;color:#555">70</div><div class="t" style="left:762.8px;top:196.6px;width:40px;text-align:center;font-size:7.5px;line-height:18px;color:#555">80</div><div class="t" style="left:802.2px;top:196.6px;width:40px;text-align:center;font-size:7.5px;line-height:18px;color:#555">90</div><div class="t" style="left:841.5px;top:196.6px;width:40px;text-align:center;font-size:7.5px;line-height:18px;color:#555">100</div><div class="t" style="left:880.9px;top:196.6px;width:40px;text-align:center;font-size:7.5px;line-height:18px;color:#555">110</div><div class="t" style="left:920.2px;top:196.6px;width:40px;text-align:center;font-size:7.5px;line-height:18px;color:#555">120</div>
<div class="t" style="left:930.5px;top:351.5px;color:#111">Publisher</div>
<div class="t" style="left:454px;top:169px">Data</div>
<div class="t" style="left:405px;top:847px;font-size:7.5px;color:#444">150</div>


<!-- DIALOG -->
<div class="a" id="dlg" style="left:285px;top:246px;width:656px;height:607px;background:#fff;border:1px solid #2d4a70;border-radius:7px;box-shadow:0 0 10px rgba(0,0,0,.2);z-index:10"></div>
<div class="a" style="left:0;top:0;width:975px;height:879px;z-index:11">

<div class="t" style="left:301.5px;top:252.5px;font-size:13px;font-weight:bold;color:#2e4a7e">Daten</div>
<svg width="975" height="879" style="left:0;top:0">
 <path d="M919.5 258.5 L927 266 M927 258.5 L919.5 266" stroke="#555" stroke-width="1.1"/>
 <rect x="298.3" y="290" width="55.4" height="26.8" rx="3" fill="#e6e6e6"/>
 <rect x="308.2" y="310" width="35.8" height="3" fill="#1f3f80"/>
 <line x1="298.5" y1="323.5" x2="928" y2="323.5" stroke="#bdbdbd" stroke-width="1" stroke-dasharray="1 2"/>
 <rect x="298.5" y="336.5" width="291" height="355" rx="3" fill="#fff" stroke="#c6c6c6"/>
 <rect x="602.5" y="336.5" width="325" height="355" rx="3" fill="#fff" stroke="#c6c6c6"/>
 <rect x="366" y="654.5" width="105" height="25.3" rx="3" fill="#dedede"/>
 <rect x="483.2" y="654.5" width="93.4" height="25.3" rx="3" fill="#dedede"/>
 <!-- up/down -->
 <rect x="897.5" y="341.5" width="24.5" height="25" rx="3" fill="#fafafa" stroke="#e2e2e2"/>
 <rect x="897.5" y="371.5" width="24.5" height="25" rx="3" fill="#fafafa" stroke="#e2e2e2"/>
 <path d="M910 347.5 L916.3 353.8 H912.7 V360.5 H907.3 V353.8 H903.7 Z" fill="#d3e6f6" stroke="#b3d1ea" stroke-width="0.9"/>
 <path d="M910 390.5 L916.3 384.2 H912.7 V377.5 H907.3 V384.2 H903.7 Z" fill="#d3e6f6" stroke="#b3d1ea" stroke-width="0.9"/>
 <!-- right list icons -->
 <g id="abcr"><rect x="610.5" y="347.3" width="13" height="7" fill="#eef7fd" stroke="#222"/><text x="611.3" y="354.0" font-size="8.6" font-weight="bold" fill="#2270b0" font-family="Liberation Sans" textLength="11.4" lengthAdjust="spacingAndGlyphs">abc</text><rect x="610.5" y="373.9" width="13" height="7" fill="#eef7fd" stroke="#222"/><text x="611.3" y="380.6" font-size="8.6" font-weight="bold" fill="#2270b0" font-family="Liberation Sans" textLength="11.4" lengthAdjust="spacingAndGlyphs">abc</text><rect x="610.5" y="401.2" width="13" height="7" fill="#eef7fd" stroke="#222"/><text x="611.3" y="407.9" font-size="8.6" font-weight="bold" fill="#2270b0" font-family="Liberation Sans" textLength="11.4" lengthAdjust="spacingAndGlyphs">abc</text></g>
 <!-- radios -->
 <circle cx="316.3" cy="716.3" r="7.8" fill="#fff" stroke="#bdbdbd"/>
 <circle cx="316.3" cy="716.3" r="4.4" fill="#adadad"/>
 <circle cx="316.3" cy="743.4" r="7.8" fill="#fff" stroke="#bdbdbd"/>
 <rect x="437.8" y="709.6" width="13.6" height="13.8" rx="3" fill="#fff" stroke="#bdbdbd"/>
 <rect x="437.8" y="736.7" width="13.6" height="13.8" rx="3" fill="#fff" stroke="#bdbdbd"/>
 <!-- buttons -->
 <rect x="752.2" y="814.1" width="81.8" height="25.8" rx="3" fill="#1b4a8c"/>
 <rect x="846" y="814.1" width="82" height="25.8" rx="3" fill="#dedede"/>
</svg>
<div class="t" style="left:310.2px;top:292.8px">Daten</div>
<div class="t" style="left:368px;top:292.8px">Stile</div>
<div class="t" style="left:377.7px;top:657px">Alles markieren</div>
<div class="t" style="left:494px;top:657px">Zurücksetzen</div>
<div class="a" style="left:603px;top:337px;width:290px;height:100px;overflow:hidden">
 <div class="t" style="left:26px;top:4px">WindowsWorkstation_Software.WindowsWorkstation_Overview.Building</div>
 <div class="t" style="left:26px;top:30.6px">WindowsWorkstation_Software.WindowsWorkstation_Overview.Model</div>
 <div class="t" style="left:26px;top:57.9px">WindowsWorkstation_Software.WindowsWorkstation_Overview.OS</div>
</div>
<div class="t" style="left:329.5px;top:706.7px">Daten</div>
<div class="t" style="left:329.5px;top:733.6px">Tabelle</div>
<div class="t" style="left:456.5px;top:706.7px">Datenkopf</div>
<div class="t" style="left:456.5px;top:733.6px">Datenfuß</div>
<div class="t" style="left:784.7px;top:816.7px;color:#fff">OK</div>
<div class="t" style="left:858.5px;top:816.7px">Abbrechen</div>

<div class="a" style="left:299px;top:337px;width:289px;height:304.5px;overflow:hidden"><div class="a" style="left:-299px;top:-337px;width:975px;height:879px"><svg width="975" height="879" style="left:0;top:0"><rect x="308.7" y="350.5" width="8" height="8" fill="#fff" stroke="#8da1b6"/><path d="M310.4 355.0 H315.0" stroke="#111" stroke-width="1.25"/><rect x="325.6" y="348.7" width="13.8" height="13.8" rx="3" fill="#fff" stroke="#bdbdbd"/><rect x="347.7" y="349.5" width="13" height="11" fill="#fff" stroke="#222"/><rect x="348.2" y="350.0" width="12" height="2.5" fill="#4d9de0"/><rect x="350.4" y="353.8" width="1.8" height="1.1" fill="#444"/><rect x="353.29999999999995" y="353.8" width="1.8" height="1.1" fill="#444"/><rect x="356.2" y="353.8" width="1.8" height="1.1" fill="#444"/><rect x="350.4" y="355.90000000000003" width="1.8" height="1.1" fill="#444"/><rect x="353.29999999999995" y="355.90000000000003" width="1.8" height="1.1" fill="#444"/><rect x="356.2" y="355.90000000000003" width="1.8" height="1.1" fill="#444"/><rect x="350.4" y="358.0" width="1.8" height="1.1" fill="#444"/><rect x="353.29999999999995" y="358.0" width="1.8" height="1.1" fill="#444"/><rect x="356.2" y="358.0" width="1.8" height="1.1" fill="#444"/><rect x="323.6" y="372.5" width="8" height="8" fill="#fff" stroke="#8da1b6"/><path d="M325.3 377.0 H329.90000000000003" stroke="#111" stroke-width="1.25"/><rect x="340.7" y="370.8" width="13.8" height="13.8" rx="3" fill="#fff" stroke="#bdbdbd"/><path d="M343.5 377.6 L346.5 380.5 L351.7 374.90000000000003" fill="none" stroke="#6b6b6b" stroke-width="1.1"/><rect x="362.5" y="375.5" width="5.5" height="6" fill="#fff" stroke="#222"/><rect x="362.8" y="375.8" width="5" height="1.8" fill="#4d9de0"/><rect x="364" y="379.0" width="2.5" height="1" fill="#555"/><rect x="370.7" y="373.5" width="5.5" height="6" fill="#fff" stroke="#222"/><rect x="371.0" y="373.8" width="5" height="1.8" fill="#4d9de0"/><rect x="372.2" y="377.0" width="2.5" height="1" fill="#555"/><path d="M368 378.5 H370.5" stroke="#222" stroke-width="0.8"/><rect x="355.7" y="392.8" width="13.8" height="13.8" rx="3" fill="#fff" stroke="#bdbdbd"/><rect x="377.6" y="395.59999999999997" width="13" height="7" fill="#eef7fd" stroke="#222"/><text x="378.40000000000003" y="402.29999999999995" font-size="8.6" font-weight="bold" fill="#2270b0" font-family="Liberation Sans" textLength="11.4" lengthAdjust="spacingAndGlyphs">abc</text><rect x="355.7" y="412.8" width="13.8" height="13.8" rx="3" fill="#fff" stroke="#bdbdbd"/><rect x="377.6" y="415.59999999999997" width="13" height="7" fill="#eef7fd" stroke="#222"/><text x="378.40000000000003" y="422.29999999999995" font-size="8.6" font-weight="bold" fill="#2270b0" font-family="Liberation Sans" textLength="11.4" lengthAdjust="spacingAndGlyphs">abc</text><rect x="355.7" y="432.8" width="13.8" height="13.8" rx="3" fill="#fff" stroke="#bdbdbd"/><rect x="377.6" y="435.59999999999997" width="13" height="7" fill="#eef7fd" stroke="#222"/><text x="378.40000000000003" y="442.29999999999995" font-size="8.6" font-weight="bold" fill="#2270b0" font-family="Liberation Sans" textLength="11.4" lengthAdjust="spacingAndGlyphs">abc</text><rect x="355.7" y="452.8" width="13.8" height="13.8" rx="3" fill="#fff" stroke="#bdbdbd"/><path d="M358.5 459.6 L361.5 462.5 L366.7 456.90000000000003" fill="none" stroke="#6b6b6b" stroke-width="1.1"/><rect x="377.6" y="455.59999999999997" width="13" height="7" fill="#eef7fd" stroke="#222"/><text x="378.40000000000003" y="462.29999999999995" font-size="8.6" font-weight="bold" fill="#2270b0" font-family="Liberation Sans" textLength="11.4" lengthAdjust="spacingAndGlyphs">abc</text><rect x="355.7" y="472.8" width="13.8" height="13.8" rx="3" fill="#fff" stroke="#bdbdbd"/><rect x="377.6" y="475.59999999999997" width="13" height="7" fill="#eef7fd" stroke="#222"/><text x="378.40000000000003" y="482.29999999999995" font-size="8.6" font-weight="bold" fill="#2270b0" font-family="Liberation Sans" textLength="11.4" lengthAdjust="spacingAndGlyphs">abc</text><rect x="355.7" y="492.8" width="13.8" height="13.8" rx="3" fill="#fff" stroke="#bdbdbd"/><path d="M358.5 499.6 L361.5 502.5 L366.7 496.90000000000003" fill="none" stroke="#6b6b6b" stroke-width="1.1"/><rect x="377.6" y="495.59999999999997" width="13" height="7" fill="#eef7fd" stroke="#222"/><text x="378.40000000000003" y="502.29999999999995" font-size="8.6" font-weight="bold" fill="#2270b0" font-family="Liberation Sans" textLength="11.4" lengthAdjust="spacingAndGlyphs">abc</text><rect x="355.7" y="512.8" width="13.8" height="13.8" rx="3" fill="#fff" stroke="#bdbdbd"/><rect x="377.6" y="515.6" width="13" height="7" fill="#eef7fd" stroke="#222"/><text x="378.40000000000003" y="522.3000000000001" font-size="8.6" font-weight="bold" fill="#2270b0" font-family="Liberation Sans" textLength="11.4" lengthAdjust="spacingAndGlyphs">abc</text><rect x="352.5" y="529.8" width="59.5" height="18.5" rx="3" fill="#e3e3e3" stroke="#555"/><rect x="355.7" y="532.8" width="13.8" height="13.8" rx="3" fill="#fff" stroke="#bdbdbd"/><path d="M358.5 539.5999999999999 L361.5 542.5 L366.7 536.9" fill="none" stroke="#6b6b6b" stroke-width="1.1"/><rect x="377.6" y="535.6" width="13" height="7" fill="#eef7fd" stroke="#222"/><text x="378.40000000000003" y="542.3000000000001" font-size="8.6" font-weight="bold" fill="#2270b0" font-family="Liberation Sans" textLength="11.4" lengthAdjust="spacingAndGlyphs">abc</text><rect x="355.7" y="552.8" width="13.8" height="13.8" rx="3" fill="#fff" stroke="#bdbdbd"/><rect x="377.6" y="555.6" width="13" height="7" fill="#eef7fd" stroke="#222"/><text x="378.40000000000003" y="562.3000000000001" font-size="8.6" font-weight="bold" fill="#2270b0" font-family="Liberation Sans" textLength="11.4" lengthAdjust="spacingAndGlyphs">abc</text><rect x="355.7" y="572.8" width="13.8" height="13.8" rx="3" fill="#fff" stroke="#bdbdbd"/><rect x="377.6" y="575.6" width="13" height="7" fill="#eef7fd" stroke="#222"/><text x="378.40000000000003" y="582.3000000000001" font-size="8.6" font-weight="bold" fill="#2270b0" font-family="Liberation Sans" textLength="11.4" lengthAdjust="spacingAndGlyphs">abc</text><rect x="355.7" y="592.8" width="13.8" height="13.8" rx="3" fill="#fff" stroke="#bdbdbd"/><rect x="377.6" y="595.6" width="13" height="7" fill="#eef7fd" stroke="#222"/><text x="378.40000000000003" y="602.3000000000001" font-size="8.6" font-weight="bold" fill="#2270b0" font-family="Liberation Sans" textLength="11.4" lengthAdjust="spacingAndGlyphs">abc</text><rect x="355.7" y="612.8" width="13.8" height="13.8" rx="3" fill="#fff" stroke="#bdbdbd"/><rect x="377.6" y="615.6" width="13" height="7" fill="#eef7fd" stroke="#222"/><text x="378.40000000000003" y="622.3000000000001" font-size="8.6" font-weight="bold" fill="#2270b0" font-family="Liberation Sans" textLength="11.4" lengthAdjust="spacingAndGlyphs">abc</text><rect x="323.6" y="636.5" width="8" height="8" fill="#fff" stroke="#8da1b6"/><path d="M325.3 641.0 H329.90000000000003" stroke="#111" stroke-width="1.25"/><path d="M327.6 638.7 V643.3" stroke="#111" stroke-width="1.25"/><rect x="340.7" y="634.8" width="13.8" height="13.8" rx="3" fill="#fff" stroke="#bdbdbd"/><rect x="362.5" y="639.5" width="5.5" height="6" fill="#fff" stroke="#222"/><rect x="362.8" y="639.8" width="5" height="1.8" fill="#4d9de0"/><rect x="364" y="643.0" width="2.5" height="1" fill="#555"/><rect x="370.7" y="637.5" width="5.5" height="6" fill="#fff" stroke="#222"/><rect x="371.0" y="637.8" width="5" height="1.8" fill="#4d9de0"/><rect x="372.2" y="641.0" width="2.5" height="1" fill="#555"/><path d="M368 642.5 H370.5" stroke="#222" stroke-width="0.8"/></svg><div class="t s11" style="left:364.2px;top:345.2px;color:#333">WindowsWorkstation_Software</div><div class="t s11" style="left:378.6px;top:366.0px;line-height:11px">WindowsWorkstation_Overview-<br>WindowsWorkstation_Software</div><div class="t s11" style="left:394.4px;top:389.2px;color:#333">Building</div><div class="t s11" style="left:394.4px;top:409.2px;color:#333">Domain</div><div class="t s11" style="left:394.4px;top:429.2px;color:#333">Floor</div><div class="t s11" style="left:394.4px;top:449.2px;color:#333">Fully_Qualified_Host_Name</div><div class="t s11" style="left:394.4px;top:469.2px;color:#333">id</div><div class="t s11" style="left:394.4px;top:489.2px;color:#333">Model</div><div class="t s11" style="left:394.4px;top:509.2px;color:#333">Organization</div><div class="t s11" style="left:394.4px;top:529.2px;color:#333">OS</div><div class="t s11" style="left:394.4px;top:549.2px;color:#333">Platform</div><div class="t s11" style="left:394.4px;top:569.2px;color:#333">Room</div><div class="t s11" style="left:394.4px;top:589.2px;color:#333">root_id</div><div class="t s11" style="left:394.4px;top:609.2px;color:#333">Site</div><div class="t s11" style="left:378.6px;top:624.8px;color:#333">Software_Overview-</div></div></div>
</div>

</body></html>
